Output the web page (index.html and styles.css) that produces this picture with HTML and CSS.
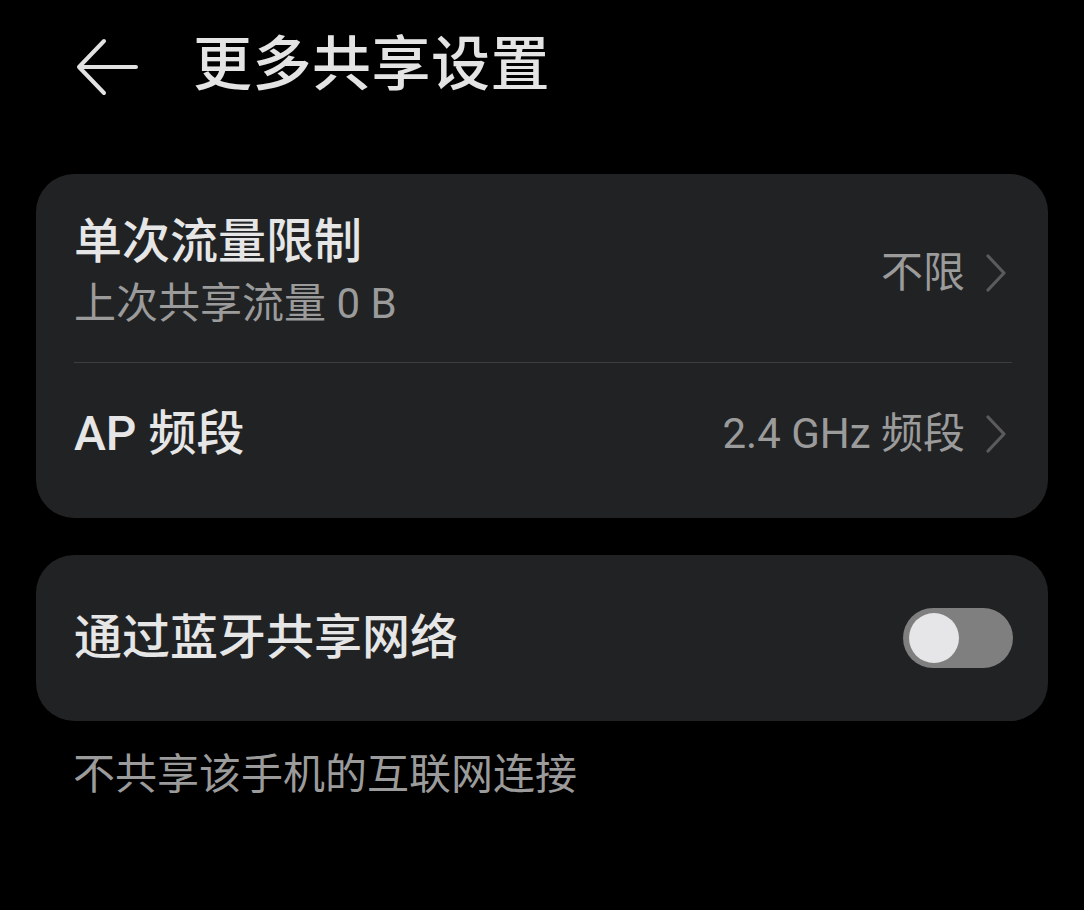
FILE: index.html
```html
<!DOCTYPE html>
<html lang="zh-CN">
<head>
<meta charset="utf-8">
<title>更多共享设置</title>
<link rel="stylesheet" href="styles.css">
</head>
<body>
<div class="page">
  <header class="header">
    <svg class="back" width="62" height="58" viewBox="0 0 62 58" aria-hidden="true">
      <path d="M28 3 L3 29 L28 55 M3 29 H60" fill="none" stroke="#e2e2e2" stroke-width="4" stroke-linecap="round" stroke-linejoin="round"/>
    </svg>
    <h1 class="title">更多共享设置</h1>
  </header>

  <section class="card">
    <div class="row row-first">
      <div class="texts">
        <div class="label">单次流量限制</div>
        <div class="sub">上次共享流量 0 B</div>
      </div>
      <div class="value">
        <span>不限</span>
        <svg class="chev" width="22" height="38" viewBox="0 0 22 38" aria-hidden="true">
          <path d="M3 2 L19 19 L3 36" fill="none" stroke="#5b5b5d" stroke-width="3.2" stroke-linecap="round" stroke-linejoin="round"/>
        </svg>
      </div>
    </div>
    <div class="divider"></div>
    <div class="row row-second">
      <div class="label">AP 频段</div>
      <div class="value">
        <span>2.4 GHz 频段</span>
        <svg class="chev" width="22" height="38" viewBox="0 0 22 38" aria-hidden="true">
          <path d="M3 2 L19 19 L3 36" fill="none" stroke="#5b5b5d" stroke-width="3.2" stroke-linecap="round" stroke-linejoin="round"/>
        </svg>
      </div>
    </div>
  </section>

  <section class="card card-toggle">
    <div class="row row-toggle">
      <div class="label">通过蓝牙共享网络</div>
      <div class="switch"><div class="knob"></div></div>
    </div>
  </section>

  <p class="note">不共享该手机的互联网连接</p>
</div>
</body>
</html>
```

FILE: styles.css
```css
html, body {
  margin: 0;
  padding: 0;
  background: #000;
}

body {
  font-family: Roboto, "Noto Sans CJK SC", "Noto Sans", sans-serif;
  color: #e6e6e6;
  width: 1084px;
  height: 910px;
  overflow: hidden;
}

.page {
  padding: 0 36px;
}

.header {
  height: 130px;
  display: flex;
  align-items: center;
  padding-left: 40px;
}

.back {
  display: block;
  flex: none;
  margin-top: 4px;
}

.title {
  margin: 0 0 0 55px;
  font-size: 59px;
  font-weight: 500;
  line-height: 70px;
  color: #e4e4e4;
  letter-spacing: 0.5px;
}

.card {
  margin-top: 44px;
  background: #212224;
  border-radius: 38px;
  padding: 0 36px 0 38px;
}

.row {
  display: flex;
  align-items: center;
  justify-content: space-between;
}

.row-first {
  height: 188px;
  box-sizing: border-box;
  padding-top: 36px;
  padding-bottom: 26px;
}

.texts {
  display: flex;
  flex-direction: column;
  gap: 6px;
}

.label {
  font-size: 48px;
  font-weight: 500;
  line-height: 56px;
  color: #e6e6e6;
}

.sub {
  font-size: 42px;
  line-height: 56px;
  color: #9b9b9b;
}

.value {
  display: flex;
  align-items: center;
  gap: 20px;
  font-size: 42px;
  line-height: 56px;
  color: #9b9b9b;
  margin-right: 5px;
}

.chev {
  display: block;
}

.divider {
  height: 1px;
  background: #3d3e40;
}

.row-second {
  height: 155px;
  box-sizing: border-box;
  padding-bottom: 14px;
}

.card-toggle {
  margin-top: 37px;
  padding-right: 35px;
}

.row-toggle {
  height: 166px;
}

.switch {
  width: 110px;
  height: 60px;
  border-radius: 30px;
  background: #7f7f80;
  display: flex;
  align-items: center;
  padding-left: 6px;
  box-sizing: border-box;
}

.knob {
  width: 50px;
  height: 50px;
  border-radius: 50%;
  background: #e6e6e8;
}

.note {
  margin: 26px 0 0 37px;
  font-size: 42px;
  line-height: 56px;
  color: #9b9b9b;
}
```
